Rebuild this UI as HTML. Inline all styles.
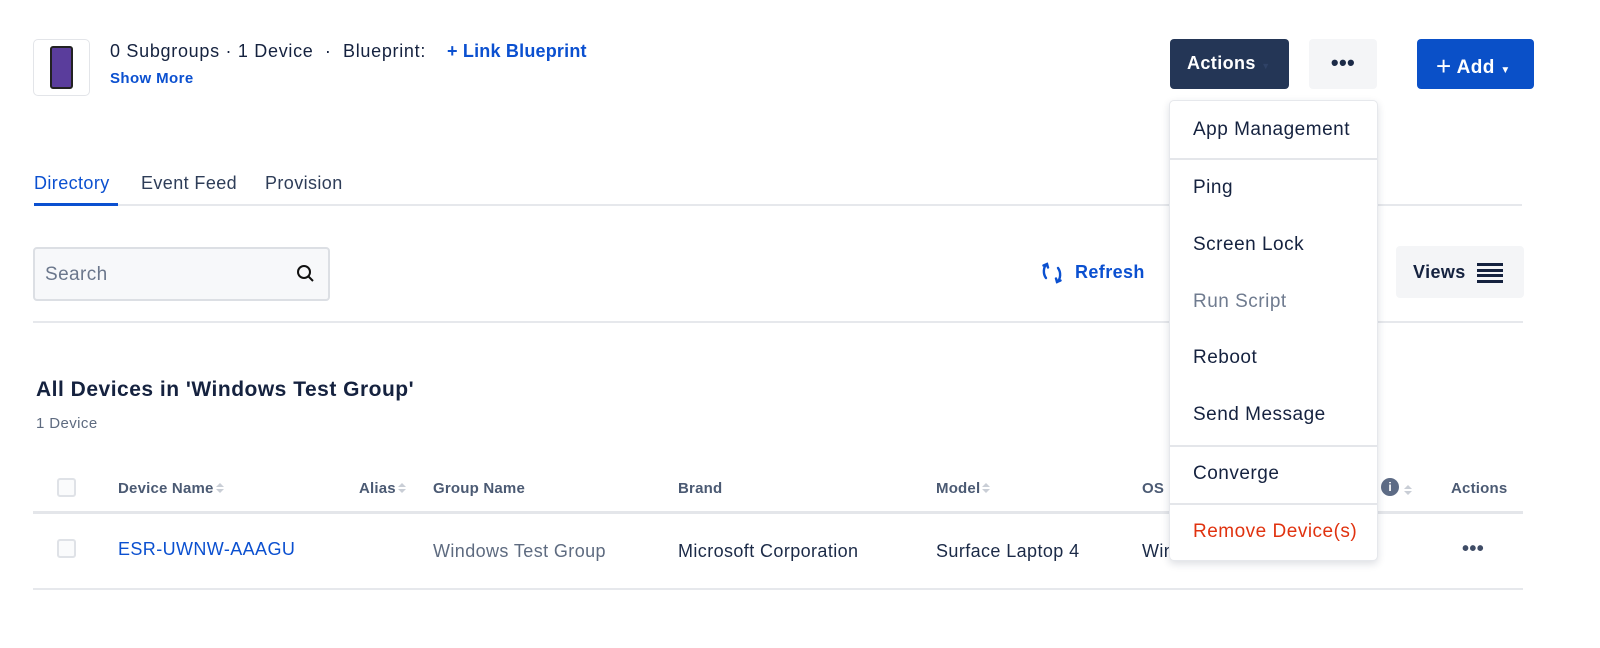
<!DOCTYPE html>
<html><head><meta charset="utf-8"><style>
*{margin:0;padding:0;box-sizing:border-box}
body{width:1600px;height:648px;background:#fff;font-family:"Liberation Sans",sans-serif;color:#1b2a47;position:relative;overflow:hidden;letter-spacing:0.4px}
.a{position:absolute;white-space:nowrap}
.blue{color:#0b50d0}
.hd{font-weight:bold;font-size:15px;color:#4b5a73;letter-spacing:0.2px}
.item{position:absolute;left:23px;font-size:19px;color:#15223f;letter-spacing:0.5px}
.cb{position:absolute;width:19px;height:19px;border:2px solid #dfe2e7;border-radius:3px;background:#fafbfc}
.sort{display:inline-block;width:8px;height:12px;vertical-align:middle;margin-left:2px;position:relative}
.sort:before{content:"";position:absolute;left:0;top:0;border:4px solid transparent;border-bottom:4px solid #c9ced6;border-top:0}
.sort:after{content:"";position:absolute;left:0;top:6px;border:4px solid transparent;border-top:4px solid #c9ced6;border-bottom:0}
</style></head><body>
<div class="a" style="left:33px;top:39px;width:57px;height:57px;border:1px solid #e3e5e9;border-radius:5px"></div>
<div class="a" style="left:50px;top:46px;width:23px;height:43px;background:#5a3d9c;border:2px solid #222;border-radius:3px"></div>
<div class="a" style="left:110px;top:41px;font-size:18px;color:#15223f;letter-spacing:0.7px">0 Subgroups · 1 Device &nbsp;·&nbsp; Blueprint:</div>
<div class="a blue" style="left:447px;top:41px;font-size:18px;font-weight:bold;letter-spacing:0.2px">+ Link Blueprint</div>
<div class="a blue" style="left:110px;top:70px;font-size:15px;font-weight:bold">Show More</div>

<div class="a" style="left:1170px;top:39px;width:119px;height:50px;background:#243656;border-radius:4px;color:#fff;font-size:18px;font-weight:bold;padding:14px 0 0 17px">Actions <span style="font-size:9px;color:#2f4266">▼</span></div>
<div class="a" style="left:1309px;top:39px;width:68px;height:50px;background:#f4f5f7;border-radius:4px;text-align:center;font-size:22px;line-height:48px;font-weight:bold;color:#1b2a47">•••</div>
<div class="a" style="left:1417px;top:39px;width:117px;height:50px;background:#0a50c8;border-radius:4px;color:#fff;font-size:19px;font-weight:bold;padding:12px 0 0 19px"><span style="font-size:26px;font-weight:normal;vertical-align:-2px">+</span> Add <span style="font-size:10px">▼</span></div>

<div class="a" style="left:34px;top:173px;font-size:18px;color:#0b50d0">Directory</div>
<div class="a" style="left:141px;top:173px;font-size:18px;color:#2e3d58">Event Feed</div>
<div class="a" style="left:265px;top:173px;font-size:18px;color:#2e3d58">Provision</div>
<div class="a" style="left:34px;top:204px;width:1488px;height:2px;background:#e6e8ec"></div>
<div class="a" style="left:34px;top:203px;width:84px;height:3px;background:#0b50d0"></div>

<div class="a" style="left:33px;top:247px;width:297px;height:54px;background:#f7f8fa;border:2px solid #dcdfe4;border-radius:4px"></div>
<div class="a" style="left:45px;top:264px;font-size:19px;color:#6b778c">Search</div>
<svg class="a" style="left:296px;top:264px" width="20" height="20" viewBox="0 0 20 20"><circle cx="8" cy="8" r="6" fill="none" stroke="#111" stroke-width="2"/><path d="M12.5 12.5L17 17" stroke="#111" stroke-width="2"/></svg>

<svg class="a" style="left:1040px;top:261px" width="24" height="24" viewBox="0 0 24 24" fill="none" stroke="#0b50d0" stroke-width="2.4" stroke-linecap="round"><path d="M7 3C3 6 3 13 6 17"/><path d="M3.5 4.5L7 3l1 3.5"/><path d="M17 21c4-3 4-10 1-14"/><path d="M20.5 19.5L17 21l-1-3.5"/></svg>
<div class="a blue" style="left:1075px;top:262px;font-size:18px;font-weight:bold">Refresh</div>

<div class="a" style="left:1396px;top:246px;width:128px;height:52px;background:#f4f5f7;border-radius:4px"></div>
<div class="a" style="left:1413px;top:262px;font-size:18px;font-weight:bold;color:#15223f">Views</div>
<div class="a" style="left:1477px;top:263px;width:26px;height:20px;border-top:3px solid #15223f;border-bottom:3px solid #15223f"></div>
<div class="a" style="left:1477px;top:269px;width:26px;height:8px;border-top:3px solid #15223f;border-bottom:3px solid #15223f"></div>

<div class="a" style="left:33px;top:321px;width:1490px;height:2px;background:#e6e8ec"></div>

<div class="a" style="left:36px;top:378px;font-size:21px;font-weight:bold;color:#15223f;letter-spacing:0.5px">All Devices in 'Windows Test Group'</div>
<div class="a" style="left:36px;top:415px;font-size:15px;color:#5e6b80">1 Device</div>

<div class="cb" style="left:57px;top:478px"></div>
<div class="a hd" style="left:118px;top:480px">Device Name<span class="sort"></span></div>
<div class="a hd" style="left:359px;top:480px">Alias<span class="sort"></span></div>
<div class="a hd" style="left:433px;top:480px">Group Name</div>
<div class="a hd" style="left:678px;top:480px">Brand</div>
<div class="a hd" style="left:936px;top:480px">Model<span class="sort"></span></div>
<div class="a hd" style="left:1142px;top:480px">OS</div>
<div class="a" style="left:1381px;top:478px;width:18px;height:18px;border-radius:50%;background:#5d6b85;color:#fff;font-size:12px;font-weight:bold;text-align:center;line-height:18px;letter-spacing:0">i</div>
<div class="a" style="left:1402px;top:482px"><span class="sort"></span></div>
<div class="a hd" style="left:1451px;top:480px">Actions</div>
<div class="a" style="left:33px;top:511px;width:1490px;height:3px;background:#e4e6ea"></div>

<div class="cb" style="left:57px;top:539px"></div>
<div class="a blue" style="left:118px;top:539px;font-size:18px">ESR-UWNW-AAAGU</div>
<div class="a" style="left:433px;top:541px;font-size:18px;color:#5e6b80">Windows Test Group</div>
<div class="a" style="left:678px;top:541px;font-size:18px">Microsoft Corporation</div>
<div class="a" style="left:936px;top:541px;font-size:18px">Surface Laptop 4</div>
<div class="a" style="left:1142px;top:541px;font-size:18px">Windows</div>
<div class="a" style="left:1462px;top:538px;font-size:20px;font-weight:bold;color:#3f4c66">•••</div>
<div class="a" style="left:33px;top:588px;width:1490px;height:2px;background:#e6e8ec"></div>

<div class="a" style="left:1169px;top:100px;width:209px;height:461px;background:#fff;border:1px solid #e6e8ec;border-radius:5px;box-shadow:0 3px 8px rgba(30,40,70,.15)">
<div class="item" style="top:18px">App Management</div>
<div style="position:absolute;left:0;right:0;top:57px;height:2px;background:#e4e6ea"></div>
<div class="item" style="top:76px">Ping</div>
<div class="item" style="top:133px">Screen Lock</div>
<div class="item" style="top:190px;color:#6f7b8f">Run Script</div>
<div class="item" style="top:246px">Reboot</div>
<div class="item" style="top:303px">Send Message</div>
<div style="position:absolute;left:0;right:0;top:344px;height:2px;background:#e4e6ea"></div>
<div class="item" style="top:362px">Converge</div>
<div style="position:absolute;left:0;right:0;top:402px;height:2px;background:#e4e6ea"></div>
<div class="item" style="top:420px;color:#e0320f">Remove Device(s)</div>
</div>
</body></html>
